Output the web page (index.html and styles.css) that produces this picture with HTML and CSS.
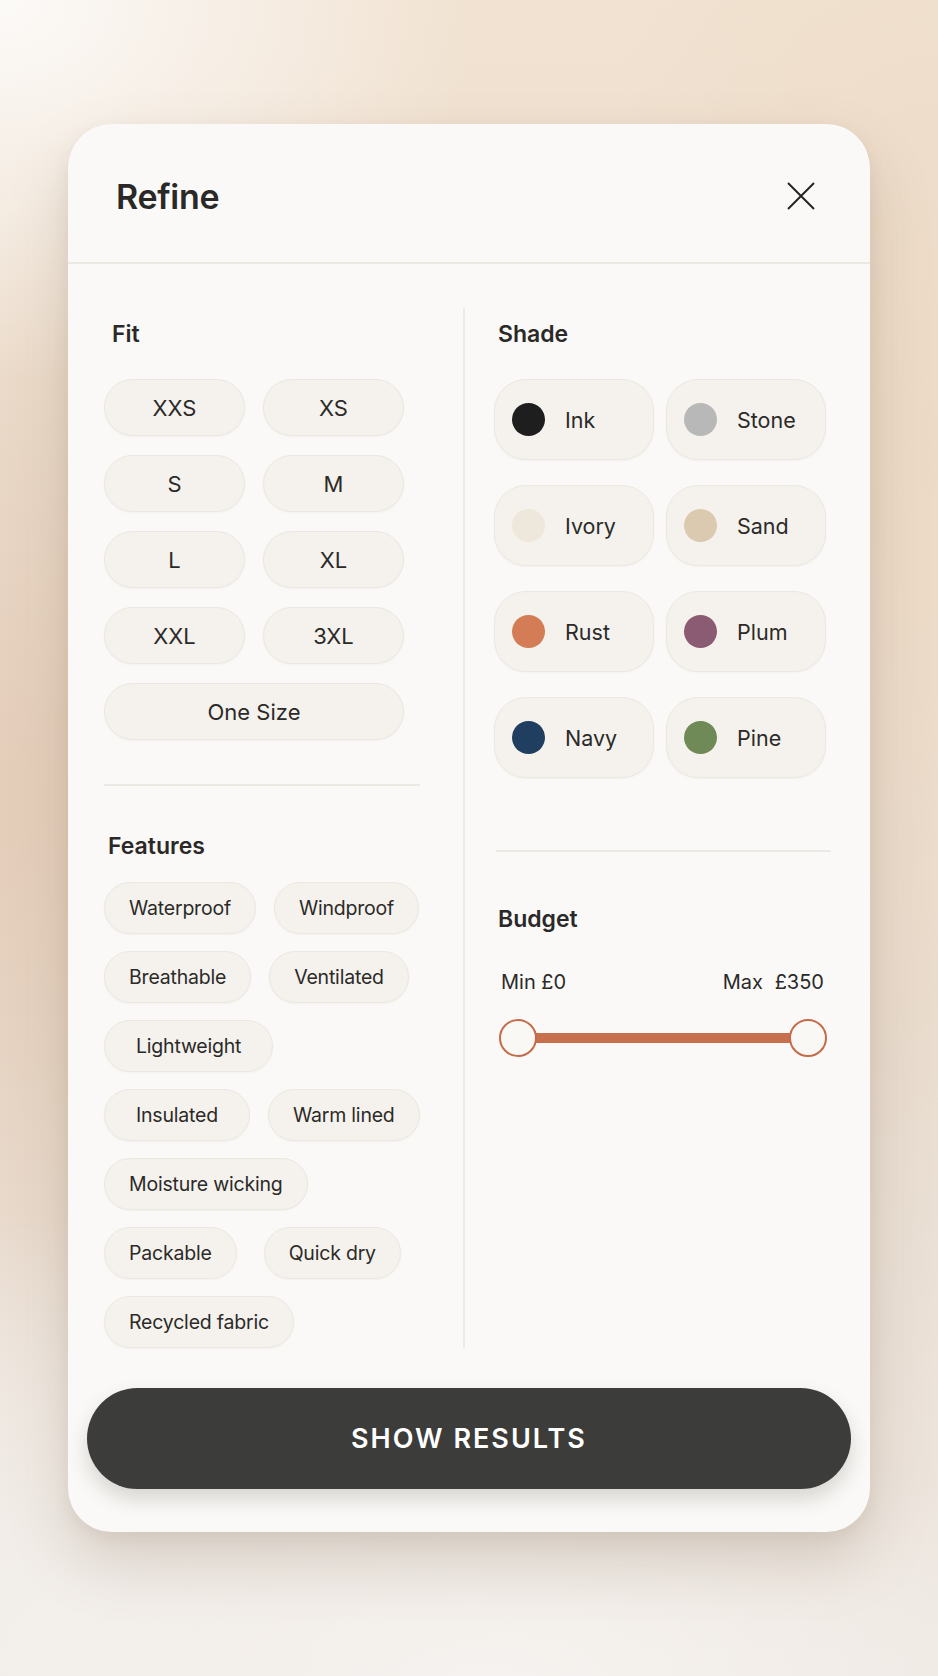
FILE: index.html
```html
<!DOCTYPE html>
<html lang="en">
<head>
    <meta charset="UTF-8">
    <title>Refine</title>
    <link rel="stylesheet" href="styles.css">
</head>
<body>
<div class="card">
    <div class="card-head">
        <h2>Refine</h2>
        <button class="close" aria-label="Close">
            <svg width="30" height="30" viewBox="0 0 30 30">
                <path d="M2 2 L28 28 M28 2 L2 28" stroke="#222" stroke-width="1.9" fill="none"/>
            </svg>
        </button>
    </div>

    <div class="card-body">
        <div class="col left">
            <h3>Fit</h3>
            <div class="sizes">
                <button class="chip">XXS</button>
                <button class="chip">XS</button>
                <button class="chip">S</button>
                <button class="chip">M</button>
                <button class="chip">L</button>
                <button class="chip">XL</button>
                <button class="chip">XXL</button>
                <button class="chip">3XL</button>
                <button class="chip wide">One Size</button>
            </div>

            <hr class="rule">

            <h3 class="features-title">Features</h3>
            <div class="features">
                <div class="feature-row">
                    <button class="tag">Waterproof</button>
                    <button class="tag">Windproof</button>
                </div>
                <div class="feature-row">
                    <button class="tag">Breathable</button>
                    <button class="tag">Ventilated</button>
                </div>
                <div class="feature-row">
                    <button class="tag roomy">Lightweight</button>
                </div>
                <div class="feature-row">
                    <button class="tag roomy">Insulated</button>
                    <button class="tag">Warm lined</button>
                </div>
                <div class="feature-row">
                    <button class="tag">Moisture wicking</button>
                </div>
                <div class="feature-row wide-gap">
                    <button class="tag">Packable</button>
                    <button class="tag">Quick dry</button>
                </div>
                <div class="feature-row">
                    <button class="tag">Recycled fabric</button>
                </div>
            </div>
        </div>

        <div class="col right">
            <h3>Shade</h3>
            <div class="shades">
                <button class="shade"><span class="dot ink"></span>Ink</button>
                <button class="shade"><span class="dot stone"></span>Stone</button>
                <button class="shade"><span class="dot ivory"></span>Ivory</button>
                <button class="shade"><span class="dot sand"></span>Sand</button>
                <button class="shade"><span class="dot rust"></span>Rust</button>
                <button class="shade"><span class="dot plum"></span>Plum</button>
                <button class="shade"><span class="dot navy"></span>Navy</button>
                <button class="shade"><span class="dot pine"></span>Pine</button>
            </div>

            <hr class="rule rule-right">

            <h3 class="budget-title">Budget</h3>
            <div class="range-labels">
                <span>Min £0</span>
                <span>Max <span class="gap">£350</span></span>
            </div>
            <div class="slider">
                <div class="track"></div>
                <span class="knob"></span>
                <span class="knob"></span>
            </div>
        </div>
    </div>

    <div class="card-foot">
        <button class="show">SHOW RESULTS</button>
    </div>
</div>
</body>
</html>
```

FILE: styles.css
```css
body {
    margin: 0;
    min-height: 1676px;
    font-family: Inter, "Noto Sans", sans-serif;
    color: #2b2a29;
    background-color: #ede2d6;
    background-image:
        radial-gradient(ellipse 520px 420px at 60px 1640px, #f3efeb 0%, rgba(243, 239, 235, 0) 100%),
        radial-gradient(ellipse 700px 260px at 470px 1676px, #f6f3f0 0%, rgba(246, 243, 240, 0) 100%),
        radial-gradient(ellipse 480px 380px at 0 0, #fcfaf8 0%, rgba(252, 250, 248, 0) 100%),
        radial-gradient(ellipse 380px 600px at 0 800px, #e4cdb9 0%, rgba(228, 205, 185, 0) 100%),
        radial-gradient(ellipse 380px 700px at 938px 450px, #eddac6 0%, rgba(237, 218, 198, 0) 100%),
        linear-gradient(180deg, #f1e2d1 0%, #e9dccf 60%, #eee7e1 100%);
    overflow: hidden;
}

button {
    font-family: inherit;
    color: inherit;
    cursor: pointer;
}

.card {
    width: 802px;
    margin: 124px auto 0;
    background: #faf9f7;
    border-radius: 44px;
    box-shadow: 0 30px 60px rgba(120, 95, 70, 0.22), 0 6px 16px rgba(120, 95, 70, 0.08);
    overflow: hidden;
}

.card-head {
    height: 140px;
    box-sizing: border-box;
    padding: 6px 54px 0 48px;
    display: flex;
    align-items: center;
    justify-content: space-between;
    border-bottom: 2px solid #ece8e3;
}

.card-head h2 {
    margin: 0;
    font-size: 34px;
    font-weight: 600;
    letter-spacing: -0.3px;
    color: #2a2928;
}

.close {
    background: none;
    border: none;
    padding: 0;
    width: 30px;
    height: 30px;
    display: flex;
}

.card-body {
    display: grid;
    grid-template-columns: 395px 1fr;
    padding-top: 44px;
}

.col h3 {
    margin: 11px 0 30px;
    font-size: 23px;
    line-height: 30px;
    font-weight: 600;
    color: #2a2928;
}

.left {
    padding: 0 43px 0 36px;
}

.left h3 {
    padding-left: 8px;
}

.left .features-title {
    margin: 45px 0 21px;
    padding-left: 4px;
}

.right {
    border-left: 2px solid #eeeae5;
    padding: 0 44px 0 29px;
}

.right h3 {
    padding-left: 4px;
}

.sizes {
    display: grid;
    grid-template-columns: 141px 141px;
    grid-auto-rows: 57px;
    gap: 19px 18px;
}

.chip,
.tag,
.shade {
    background: #f5f2ed;
    border: 1.5px solid #ece7e0;
    box-shadow: 0 1px 2px rgba(140, 120, 100, 0.06);
}

.chip {
    border-radius: 30px;
    font-size: 22px;
    padding: 0;
}

.chip.wide {
    grid-column: 1 / 3;
}

.rule {
    border: none;
    border-top: 2px solid #ece8e3;
    margin: 44px 0 0;
}

.features {
    display: flex;
    flex-direction: column;
    gap: 17px;
}

.feature-row {
    display: flex;
    gap: 18px;
}

.feature-row.wide-gap {
    gap: 27px;
}

.tag {
    flex: none;
    white-space: nowrap;
    height: 52px;
    padding: 0 24px;
    border-radius: 26px;
    font-size: 19.5px;
    letter-spacing: -0.2px;
}

.tag.roomy {
    padding: 0 31px;
}

.shades {
    display: grid;
    grid-template-columns: 1fr 1fr;
    grid-auto-rows: 81px;
    gap: 25px 12px;
}

.shade {
    border-radius: 32px;
    display: flex;
    align-items: center;
    gap: 20px;
    padding: 0 0 0 17px;
    font-size: 21.5px;
}

.dot {
    width: 33px;
    height: 33px;
    border-radius: 50%;
    flex: none;
}

.ink { background: #1e1e1e; }
.stone { background: #b8b8b8; }
.ivory { background: #ede7dc; }
.sand { background: #dbcab0; }
.rust { background: #d37c55; }
.plum { background: #8a5b73; }
.navy { background: #203e5f; }
.pine { background: #6f8a57; }

.rule-right {
    margin: 72px -5px 0 2px;
}

.right .budget-title {
    margin: 52px 0 36px;
}

.range-labels {
    display: flex;
    justify-content: space-between;
    padding: 0 2px 0 7px;
    font-size: 20px;
    line-height: 24px;
}

.range-labels .gap {
    margin-left: 6px;
}

.slider {
    position: relative;
    height: 38px;
    margin: 25px -1px 0 5px;
    display: flex;
    align-items: center;
    justify-content: space-between;
}

.track {
    position: absolute;
    left: 19px;
    right: 19px;
    top: 14px;
    height: 10px;
    background: #c8704e;
}

.knob {
    position: relative;
    width: 38px;
    height: 38px;
    box-sizing: border-box;
    border-radius: 50%;
    border: 2.5px solid #c46c4a;
    background: #faf8f5;
}

.card-foot {
    padding: 40px 19px 43px;
}

.show {
    width: 100%;
    height: 101px;
    border: none;
    border-radius: 51px;
    background: #3c3c3a;
    color: #ffffff;
    font-size: 27px;
    font-weight: 600;
    letter-spacing: 2px;
    box-shadow: 0 10px 20px rgba(60, 50, 40, 0.18);
}
```
